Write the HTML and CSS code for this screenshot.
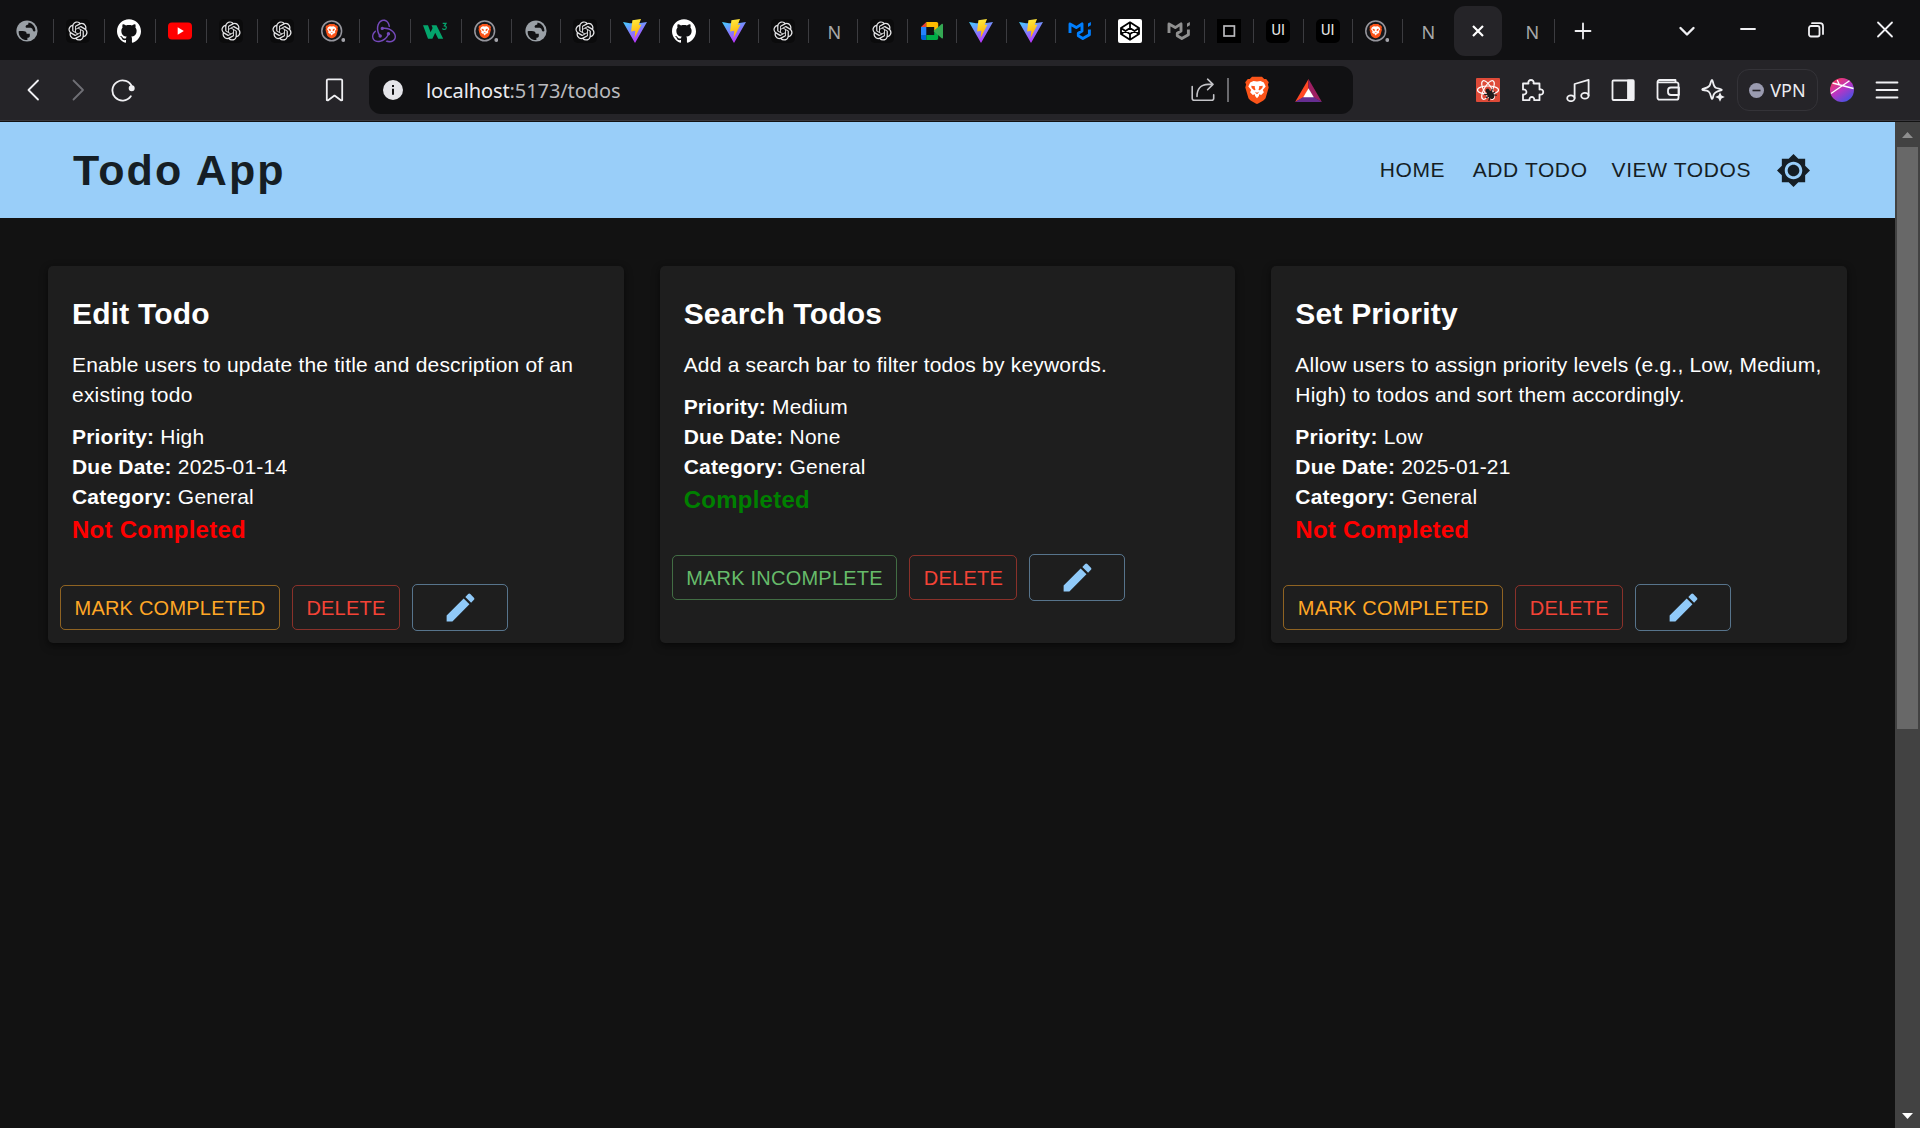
FILE: index.html
```html
<!DOCTYPE html>
<html lang="en">
<head>
<meta charset="utf-8">
<title>Todo App</title>
<link rel="stylesheet" href="styles.css">
</head>
<body>
<svg class="sprite" aria-hidden="true">
  <defs>
    <linearGradient id="vite-body" x1="0" y1="0" x2=".5" y2="1"><stop offset="0" stop-color="#41d1ff"/><stop offset="1" stop-color="#bd34fe"/></linearGradient>
    <linearGradient id="vite-bolt" x1=".4" y1="0" x2=".6" y2="1"><stop offset="0" stop-color="#ffea3d"/><stop offset="1" stop-color="#ffa800"/></linearGradient>
    <linearGradient id="orb" x1=".1" y1="0" x2=".8" y2="1"><stop offset="0" stop-color="#ff3a4e"/><stop offset=".5" stop-color="#b935c4"/><stop offset="1" stop-color="#3b55e6"/></linearGradient>
    <symbol id="globe" viewBox="0 0 24 24"><circle cx="12" cy="12" r="10.6" fill="#9aa0a6"/><path d="M3.7 12.2c1.700-.4 4-.2 5.600 0 1.500.2 2.400 1.100 2.300 2.500l3.200.1v2.500c-.1 1.300-1.500 1.500-2.400 1.500v2.300C7.500 21.400 3.200 17.500 3.700 12.200zM13.600 3.500c4 .7 6.900 4.300 6.800 8.600-1.300.8-2.300.1-2.600-1.200-.4-1.700-1.500-2.100-3.400-2.100h-2.300c-1.400 0-1.900-1-1.200-2.100.5-.8 1.200-.9 2.200-.9z" fill="#111113"/></symbol>
    <symbol id="openai" viewBox="-3 -3 30 30"><rect x="-3" y="-3" width="30" height="30" rx="6" fill="#0b0b0c"/><path fill="#e4e4e6" d="M22.282 9.821a5.985 5.985 0 0 0-.516-4.910 6.046 6.046 0 0 0-6.510-2.900A6.065 6.065 0 0 0 4.981 4.182a5.985 5.985 0 0 0-3.998 2.900 6.046 6.046 0 0 0 .743 7.097 5.980 5.980 0 0 0 .511 4.911 6.051 6.051 0 0 0 6.515 2.900A5.985 5.985 0 0 0 13.260 24a6.056 6.056 0 0 0 5.772-4.206 5.990 5.990 0 0 0 3.998-2.900 6.056 6.056 0 0 0-.747-7.073zM13.260 22.430a4.476 4.476 0 0 1-2.876-1.040l.141-.081 4.779-2.758a.795.795 0 0 0 .393-.681v-6.737l2.020 1.169a.071.071 0 0 1 .038.052v5.583a4.504 4.504 0 0 1-4.495 4.494zM3.600 18.304a4.471 4.471 0 0 1-.535-3.014l.142.085 4.783 2.759a.771.771 0 0 0 .781 0l5.843-3.369v2.332a.080.080 0 0 1-.033.062L9.740 19.950a4.500 4.500 0 0 1-6.140-1.646zM2.341 7.896a4.485 4.485 0 0 1 2.366-1.973V11.600a.766.766 0 0 0 .388.677l5.815 3.354-2.020 1.169a.076.076 0 0 1-.071 0l-4.830-2.787A4.504 4.504 0 0 1 2.341 7.872zm16.597 3.855l-5.833-3.387L15.119 7.200a.076.076 0 0 1 .071 0l4.830 2.791a4.494 4.494 0 0 1-.677 8.105v-5.678a.790.790 0 0 0-.405-.667zm2.010-3.023l-.141-.085-4.774-2.782a.776.776 0 0 0-.785 0L9.409 9.230V6.897a.066.066 0 0 1 .028-.062l4.830-2.787a4.500 4.500 0 0 1 6.681 4.660zm-12.640 4.135l-2.020-1.164a.080.080 0 0 1-.038-.057V6.074a4.500 4.500 0 0 1 7.376-3.453l-.142.080L8.704 5.460a.795.795 0 0 0-.393.682zm1.097-2.366l2.602-1.500 2.607 1.500v2.999l-2.597 1.500-2.607-1.500z"/></symbol>
    <symbol id="github" viewBox="0 0 24 24"><path fill="#fff" d="M12 .297c-6.630 0-12 5.373-12 12 0 5.303 3.438 9.800 8.205 11.385.6.113.820-.258.820-.577 0-.285-.010-1.040-.015-2.040-3.338.724-4.042-1.610-4.042-1.610C4.422 18.070 3.633 17.700 3.633 17.700c-1.087-.744.084-.729.084-.729 1.205.084 1.838 1.236 1.838 1.236 1.070 1.835 2.809 1.305 3.495.998.108-.776.417-1.305.760-1.605-2.665-.3-5.466-1.332-5.466-5.930 0-1.310.465-2.380 1.235-3.220-.135-.303-.540-1.523.105-3.176 0 0 1.005-.322 3.300 1.230.960-.267 1.980-.399 3-.405 1.020.006 2.040.138 3 .405 2.280-1.552 3.285-1.230 3.285-1.230.645 1.653.240 2.873.120 3.176.765.840 1.230 1.910 1.230 3.220 0 4.610-2.805 5.625-5.475 5.920.420.360.810 1.096.810 2.220 0 1.606-.015 2.896-.015 3.286 0 .315.210.690.825.570C20.565 22.092 24 17.592 24 12.297c0-6.627-5.373-12-12-12"/></symbol>
    <symbol id="youtube" viewBox="0 0 24 24"><rect y="3.600" width="24" height="16.800" rx="4" fill="#f00"/><path d="M9.700 8.300v7.400l6.100-3.700z" fill="#fff"/></symbol>
    <symbol id="lion" viewBox="0 0 24 28"><path d="M7 .8h10l2.200 2.300 2-.2 2.600 3.400-.9 2.300.8 2.800-3 10.400c-.8 2.600-5.700 4.800-8.700 6.200-3-1.400-7.900-3.600-8.700-6.200L.3 11.400l.8-2.800-.9-2.300 2.600-3.400 2 .2z" fill="#fb5419"/><path d="M12 5.600l3.500-.7 3.300 1.700 1.900 4-2.900 3.500 1.100 2.200-2.700 2.600-2-.6-.3 1.700L12 22.200 10.100 20l-.3-1.700-2 .6-2.700-2.600 1.100-2.200-2.900-3.500 1.900-4 3.300-1.700z" fill="#fff"/><path d="M6.200 9.700l3.900.5-.4.900.8 2.800-1.300.3-2.500-2.200zM17.800 9.700l-3.900.5.4.9-.8 2.800 1.300.3 2.500-2.200zM10 15.700l2 1 2-1-1.200 2h-1.600z" fill="#fb5419"/></symbol>
    <symbol id="brave-tab" viewBox="0 0 24 24"><circle cx="10.700" cy="11.900" r="9.900" fill="#17171a" stroke="#96969d" stroke-width="1.500"/><use href="#lion" x="4.200" y="4.600" width="13" height="15"/><circle cx="22.300" cy="21" r="1.900" fill="#a3a3aa"/></symbol>
    <symbol id="redux" viewBox="0 0 24 24"><path fill="#764abc" d="M16.634 16.504c.870-.075 1.543-.840 1.500-1.754-.047-.914-.796-1.648-1.709-1.648h-.061a1.710 1.710 0 0 0-1.648 1.769c.030.479.226.869.494 1.153-1.048 2.038-2.621 3.535-5.005 4.795-1.603.838-3.296 1.154-4.944.929-1.378-.194-2.456-.810-3.116-1.799-.988-1.499-1.078-3.116-.255-4.734.601-1.166 1.499-2.023 2.099-2.443a9.960 9.960 0 0 1-.420-1.543C-.868 14.408-.416 18.752.932 20.805c1.004 1.498 3.057 2.456 5.304 2.456.6 0 1.230-.044 1.843-.194 3.897-.749 6.848-3.086 8.541-6.532zm5.348-3.746c-2.320-2.728-5.738-4.226-9.634-4.226h-.510c-.253-.554-.837-.899-1.498-.899h-.045c-.943 0-1.678.810-1.647 1.753.030.898.794 1.648 1.708 1.648h.074a1.690 1.690 0 0 0 1.499-1.049h.555c2.309 0 4.495.674 6.488 1.992 1.527 1.005 2.622 2.323 3.237 3.896.538 1.288.509 2.547-.045 3.597-.855 1.647-2.294 2.517-4.196 2.517-1.199 0-2.367-.375-2.967-.644-.360.298-.960.793-1.394 1.093 1.318.598 2.652.943 3.940.943 2.922 0 5.093-1.647 5.918-3.236.898-1.798.824-4.824-1.470-7.416zM6.490 17.042c.030.899.793 1.648 1.708 1.648h.060a1.688 1.688 0 0 0 1.648-1.768c0-.899-.779-1.647-1.693-1.647h-.060c-.060 0-.149 0-.225.029-1.243-2.098-1.768-4.346-1.572-6.772.120-1.828.720-3.417 1.797-4.735.899-1.124 2.593-1.683 3.746-1.708 3.236-.061 4.585 3.971 4.689 5.574l1.498.450c-.345-4.914-3.400-7.492-6.322-7.492-2.742 0-5.273 1.993-6.293 4.915-1.393 3.896-.479 7.641 1.229 10.638-.149.195-.239.539-.210.868z"/></symbol>
    <symbol id="w3" viewBox="0 0 24 24"><path d="M0 6.200h5l2.600 7 2-4.300L8.500 6.200h5l6.700 13.500h-5l-3-6-2.800 6H5z" fill="#04a56c"/><path d="M19.700 4.300h3.400l-1.700 2.500c2.700.1 2.300 3.700-.2 3.600-.9 0-1.500-.4-1.700-1.100" fill="none" stroke="#04a56c" stroke-width="1.200"/></symbol>
    <symbol id="vite" viewBox="0 0 24 24"><path d="M0 3L12 24 24 3 17.500 4.100 7 4.200z" fill="url(#vite-body)"/><path d="M9.400 1.300L18 0l-2.300 5.900 2.800-.4L11.600 19l.7-7.200-4.200.7z" fill="url(#vite-bolt)"/></symbol>
    <symbol id="meet" viewBox="0 0 24 24"><path d="M1 8L6.300 2.900V8z" fill="#ea4335"/><path d="M6.300 2.900H16.500a1.700 1.700 0 0 1 1.700 1.700V10l-4 3V8H6.300z" fill="#ffba00"/><path d="M1 8h5.300v8H1z" fill="#2684fc"/><path d="M1 16h5.300v5H2.800A1.800 1.800 0 0 1 1 19.200z" fill="#0066da"/><path d="M6.300 16h7.900v-5l4 3v5.300a1.700 1.700 0 0 1-1.700 1.700H6.300z" fill="#00ac47"/><path d="M13.500 12l8.200-7.100c.6-.5 1.300-.2 1.300.5v13.300c0 .7-.7 1-1.300.5z" fill="#34a853"/></symbol>
    <symbol id="mui" viewBox="0 0 24 24"><path d="M2 14V4.900l6.300 3.700L14 4.900v7l-3.700 2.300v2.600l4.500 2.700 6.600-3.800v-5.300" fill="none" stroke="currentColor" stroke-width="2.900" stroke-linejoin="round"/><path d="M20 4.600l2.900-1.700v3.300L20 7.900z" fill="currentColor"/></symbol>
    <symbol id="codepen" viewBox="0 0 24 24"><rect width="24" height="24" rx="2" fill="#fff"/><path d="M12 3.300l9 5.700v6l-9 5.800L3 15V9zM12 3.300V9m0 6v5.800M3 9l9 6 9-6M3 15l9-6 9 6" fill="none" stroke="#000" stroke-width="1.800" stroke-linejoin="round"/></symbol>
    <symbol id="square" viewBox="0 0 24 24"><rect width="24" height="24" fill="#000"/><rect x="7" y="7" width="10.400" height="10" fill="none" stroke="#b9b9bc" stroke-width="1.700"/></symbol>
  </defs>
</svg>

<div class="browser">
  <div class="tabs">
    <div class="tab"><svg class="fav"><use href="#globe"/></svg></div>
    <div class="tab"><svg class="fav"><use href="#openai"/></svg></div>
    <div class="tab"><svg class="fav"><use href="#github"/></svg></div>
    <div class="tab"><svg class="fav"><use href="#youtube"/></svg></div>
    <div class="tab"><svg class="fav"><use href="#openai"/></svg></div>
    <div class="tab"><svg class="fav"><use href="#openai"/></svg></div>
    <div class="tab"><svg class="fav"><use href="#brave-tab"/></svg></div>
    <div class="tab"><svg class="fav"><use href="#redux"/></svg></div>
    <div class="tab"><svg class="fav"><use href="#w3"/></svg></div>
    <div class="tab narrow"><svg class="fav"><use href="#brave-tab"/></svg></div>
    <div class="tab narrow"><svg class="fav"><use href="#globe"/></svg></div>
    <div class="tab narrow"><svg class="fav"><use href="#openai"/></svg></div>
    <div class="tab narrow"><svg class="fav"><use href="#vite"/></svg></div>
    <div class="tab narrow"><svg class="fav"><use href="#github"/></svg></div>
    <div class="tab narrow"><svg class="fav"><use href="#vite"/></svg></div>
    <div class="tab narrow"><svg class="fav"><use href="#openai"/></svg></div>
    <div class="tab narrow"><span class="letter">N</span></div>
    <div class="tab narrow"><svg class="fav"><use href="#openai"/></svg></div>
    <div class="tab narrow"><svg class="fav"><use href="#meet"/></svg></div>
    <div class="tab narrow"><svg class="fav"><use href="#vite"/></svg></div>
    <div class="tab narrow"><svg class="fav"><use href="#vite"/></svg></div>
    <div class="tab narrow"><svg class="fav blue"><use href="#mui"/></svg></div>
    <div class="tab narrow"><svg class="fav"><use href="#codepen"/></svg></div>
    <div class="tab narrow"><svg class="fav gray"><use href="#mui"/></svg></div>
    <div class="tab narrow"><svg class="fav"><use href="#square"/></svg></div>
    <div class="tab narrow"><span class="ui-mark">UI</span></div>
    <div class="tab narrow"><span class="ui-mark">UI</span></div>
    <div class="tab narrow"><svg class="fav"><use href="#brave-tab"/></svg></div>
    <div class="tab narrow plain"><span class="letter">N</span></div>
    <div class="tab active"><svg class="close-icon" viewBox="0 0 12 12"><path d="M1 1l10 10M11 1L1 11"/></svg></div>
    <div class="tab last"><span class="letter">N</span></div>
    <div class="new-tab"><svg class="line-icon" viewBox="0 0 24 24"><path d="M12 4.500v15M4.500 12h15"/></svg></div>
    <div class="window-controls">
      <svg class="line-icon thick chevron" viewBox="0 0 24 24"><path d="M5.500 10l6.500 6.500 6.500-6.500"/></svg>
      <svg class="line-icon minimize" viewBox="0 0 24 24"><path d="M5 11h14"/></svg>
      <svg class="line-icon maximize" viewBox="0 0 24 24"><rect x="5" y="8" width="10.500" height="10.500" rx="2"/><path d="M8 5.200h8a3 3 0 0 1 3 3V16"/></svg>
      <svg class="line-icon" viewBox="0 0 24 24"><path d="M5 4.500l14 14M19 4.500l-14 14"/></svg>
    </div>
  </div>

  <div class="toolbar">
    <div class="nav-icons">
      <svg class="line-icon" viewBox="0 0 24 24"><path d="M17 2.500L7.500 12l9.500 9.500"/></svg>
      <svg class="line-icon dim" viewBox="0 0 24 24"><path d="M7.500 2.500L17 12l-9.500 9.500"/></svg>
      <svg class="line-icon" viewBox="0 0 24 24"><path d="M19.800 18.300A10.100 10.100 0 1 1 21 9"/><circle cx="20.700" cy="10.200" r="2.100" fill="#f0f0f3"/></svg>
    </div>
    <svg class="line-icon bookmark" viewBox="0 0 24 24"><path d="M5 1.300h13a1.200 1.200 0 0 1 1.200 1.200v19.700l-1 .2-6.700-4.800-6.700 4.800-1-.2V2.500A1.200 1.200 0 0 1 5 1.300z"/></svg>
    <div class="address">
      <svg class="info" viewBox="0 0 20 20"><circle cx="10" cy="10" r="10" fill="#e4e4e9"/><path d="M10 5v2M10 8.700v6" stroke="#111113" stroke-width="2"/></svg>
      <span class="url">localhost<span class="url-rest">:5173/todos</span></span>
      <svg class="line-icon share" viewBox="0 0 24 24"><path d="M1.200 8.500v11.800a2 2 0 0 0 2 2h17.500a2 2 0 0 0 2-2v-3.500M6 18.500C6 11 10 6.400 17.200 6.400H22M16.600 1.200L22 6.400l-5.400 5.300"/></svg>
      <span class="divider"></span>
      <svg class="shield" viewBox="0 0 24 28"><use href="#lion"/></svg>
      <svg class="bat" viewBox="0 0 28 24"><path d="M14 0L0 24l9.300-5L14 10z" fill="#ff4724"/><path d="M14 0l14 24-9.300-5L14 10z" fill="#9e1f63"/><path d="M0 24l8.500-5.200h11L28 24z" fill="#662d91"/><path d="M14 9.600l5.500 9.400h-11z" fill="#fff"/></svg>
    </div>
    <div class="tools">
      <svg class="tool" viewBox="0 0 24 24"><rect width="24" height="24" rx="1" fill="#de4a38"/><g fill="none" stroke="#fff" stroke-width="1.200"><ellipse cx="12" cy="12" rx="10.500" ry="4"/><ellipse cx="12" cy="12" rx="10.500" ry="4" transform="rotate(60 12 12)"/><ellipse cx="12" cy="12" rx="10.500" ry="4" transform="rotate(120 12 12)"/></g><g transform="rotate(-35 14 16)"><ellipse cx="14" cy="17" rx="3" ry="4.500" fill="#1c1c1c"/><circle cx="14" cy="11.800" r="2" fill="#1c1c1c"/><path d="M9 13l10 8M19 13L9 21M8.500 17h11" stroke="#1c1c1c" stroke-width="1.200"/></g></svg>
      <svg class="tool line-icon" viewBox="0 0 24 24"><path d="M2 5.500h5.500c-1.300-4.700 6.300-4.700 5 0H18.500v6c5-1.300 5 6.300 0 5V22.200h-5.300c.6-4.300-5.300-4.300-4.700 0H2v-5.700c4.600.7 4.600-5.700 0-5z"/></svg>
      <svg class="tool line-icon" viewBox="0 0 24 24"><path d="M8.600 20V6l14-4.200v15.800"/><ellipse cx="4.900" cy="20.300" rx="3.700" ry="2.900"/><ellipse cx="18.900" cy="17.700" rx="3.700" ry="2.900"/></svg>
      <svg class="tool line-icon" viewBox="0 0 24 24"><rect x="1.500" y="2.500" width="21" height="19.500" rx="1"/><path d="M17 2.500h5.500V22H17z" fill="#f0f0f3"/></svg>
      <svg class="tool line-icon" viewBox="0 0 24 24"><path d="M22.500 8.500V6.300a2 2 0 0 0-2-2H1.500M22.500 8.500v11.200a2 2 0 0 1-2 2h-17a2 2 0 0 1-2-2V4a2 2 0 0 1 2-2h16v2M23 9.500h-8a3 3 0 0 0-3 3v1.500a3 3 0 0 0 3 3h8z"/></svg>
      <svg class="tool line-icon" viewBox="0 0 24 24"><path d="M11 1.800c1.300 0 .7 7.200 4.300 8.200 3 .8 5.500.8 5.500 1.900 0 1-6.600.8-8.200 5-.7 2-.6 4.300-1.600 4.300s-.8-5.600-3.500-7.800C5 11.600 1.200 12.800 1.200 11.500s5-.6 7.200-3.600C10 5.500 9.900 1.800 11 1.800z"/><path d="M19 14.300l1.500 3.200 3.300 1.500-3.300 1.500L19 23.800l-1.500-3.300-3.300-1.500 3.300-1.500z" fill="#f0f0f3" stroke="none"/></svg>
      <div class="vpn"><svg class="vpn-dot" viewBox="0 0 15 15"><circle cx="7.500" cy="7.500" r="7.500" fill="#9a9bb0"/><path d="M3.500 7.500h8" stroke="#252428" stroke-width="1.600"/></svg><span>VPN</span></div>
      <svg class="tool" viewBox="0 0 24 24"><circle cx="12" cy="12" r="12" fill="url(#orb)"/><path d="M2.500 5l21 5.500M1 15.500L19.500 2.800M9.500 7l-2.300-5" stroke="#fff" stroke-width="1.300" fill="none"/></svg>
      <svg class="tool line-icon menu" viewBox="0 0 24 24"><path d="M1.500 4.500h21M1.500 12h21M1.500 19.500h21"/></svg>
    </div>
  </div>
</div>

<div class="viewport">
  <div class="page">
    <header class="appbar">
      <div class="brand">Todo App</div>
      <nav class="menu-links">
        <a class="link home">HOME</a>
        <a class="link add">ADD TODO</a>
        <a class="link view">VIEW TODOS</a>
        <svg class="theme-icon" viewBox="0 0 24 24"><path d="M20 8.690V4h-4.690L12 .690 8.690 4H4v4.690L.690 12 4 15.310V20h4.690L12 23.310 15.310 20H20v-4.690L23.310 12 20 8.690zM12 18c-3.310 0-6-2.690-6-6s2.690-6 6-6 6 2.690 6 6-2.690 6-6 6zm0-10c-2.210 0-4 1.790-4 4s1.790 4 4 4 4-1.790 4-4-1.790-4-4-4z"/></svg>
      </nav>
    </header>

    <main class="cards">
      <article class="card">
        <h2 class="card-title">Edit Todo</h2>
        <p class="text">Enable users to update the title and description of an existing todo</p>
        <p class="facts"><b>Priority:</b> High<br><b>Due Date:</b> 2025-01-14<br><b>Category:</b> General</p>
        <p class="status open">Not Completed</p>
        <div class="actions">
          <button class="btn warning">MARK COMPLETED</button>
          <button class="btn error">DELETE</button>
          <button class="btn edit"><svg class="pencil" viewBox="0 0 24 24"><path d="M3 17.250V21h3.750L17.810 9.940l-3.750-3.750L3 17.250zM20.710 7.040c.390-.390.390-1.020 0-1.410l-2.340-2.340a.9959.9959 0 0 0-1.410 0l-1.830 1.830 3.750 3.750 1.830-1.830z"/></svg></button>
        </div>
      </article>
      <article class="card">
        <h2 class="card-title">Search Todos</h2>
        <p class="text">Add a search bar to filter todos by keywords.</p>
        <p class="facts"><b>Priority:</b> Medium<br><b>Due Date:</b> None<br><b>Category:</b> General</p>
        <p class="status done">Completed</p>
        <div class="actions">
          <button class="btn success">MARK INCOMPLETE</button>
          <button class="btn error">DELETE</button>
          <button class="btn edit"><svg class="pencil" viewBox="0 0 24 24"><path d="M3 17.250V21h3.750L17.810 9.940l-3.750-3.750L3 17.250zM20.710 7.040c.390-.390.390-1.020 0-1.410l-2.340-2.340a.9959.9959 0 0 0-1.410 0l-1.830 1.830 3.750 3.750 1.830-1.830z"/></svg></button>
        </div>
      </article>
      <article class="card">
        <h2 class="card-title">Set Priority</h2>
        <p class="text">Allow users to assign priority levels (e.g., Low, Medium, High) to todos and sort them accordingly.</p>
        <p class="facts"><b>Priority:</b> Low<br><b>Due Date:</b> 2025-01-21<br><b>Category:</b> General</p>
        <p class="status open">Not Completed</p>
        <div class="actions">
          <button class="btn warning">MARK COMPLETED</button>
          <button class="btn error">DELETE</button>
          <button class="btn edit"><svg class="pencil" viewBox="0 0 24 24"><path d="M3 17.250V21h3.750L17.810 9.940l-3.750-3.750L3 17.250zM20.710 7.040c.390-.390.390-1.020 0-1.410l-2.340-2.340a.9959.9959 0 0 0-1.410 0l-1.830 1.830 3.750 3.750 1.830-1.830z"/></svg></button>
        </div>
      </article>
    </main>
  </div>
  <div class="scrollbar">
    <svg class="arrow up" viewBox="0 0 11 6"><path d="M5.500 0L11 6H0z"/></svg>
    <div class="thumb"></div>
    <svg class="arrow down" viewBox="0 0 11 6"><path d="M0 0h11L5.500 6z"/></svg>
  </div>
</div>
</body>
</html>
```
FILE: styles.css
```css
* { box-sizing: border-box; }
body {
  margin: 0;
  height: 1128px;
  display: flex;
  flex-direction: column;
  overflow: hidden;
  background: #121212;
  color: #fff;
  font-family: "Liberation Sans", Arial, sans-serif;
}
svg { display: block; flex: none; }
.sprite { position: absolute; width: 0; height: 0; }

/* Browser chrome */
.browser { height: 122px; flex: none; font-family: "Noto Sans", sans-serif; }
.tabs {
  height: 60px;
  padding-left: 3px;
  display: flex;
  align-items: center;
  background: #111113;
}
.tab {
  width: 51px;
  height: 24px;
  margin-top: 2px;
  padding-right: 2px;
  border-right: 1px solid #3c3c40;
  display: flex;
  align-items: center;
  justify-content: center;
  flex: none;
}
.tab.narrow { width: 49.5px; padding-right: 0; }
.tab.plain { border-right-color: transparent; }
.fav { width: 24px; height: 24px; }
.fav.blue { color: #007fff; }
.fav.gray { color: #909090; }
.letter { padding: 1px 0 0 3px; font-size: 18px; line-height: 24px; color: #a8a8aa; }
.ui-mark {
  width: 24px;
  height: 24px;
  border-radius: 5px;
  background: #000;
  color: #e8e8e8;
  font: 400 14.500px/24px Roboto, sans-serif;
  text-align: center;
}
.tab.active {
  width: 48px;
  height: 50px;
  margin: 2px 6px 0 1.500px;
  padding: 0;
  border: 0;
  border-radius: 11px;
  background: #252428;
}
.close-icon { width: 12px; height: 12px; fill: none; stroke: #fff; stroke-width: 2.200; }
.tab.last { width: 47.500px; padding-right: 0; }
.new-tab { width: 55px; padding-top: 1px; display: flex; justify-content: center; }
.window-controls {
  margin-left: auto;
  margin-right: 23px;
  display: flex;
}
.chevron { margin-right: 36.500px; }
.minimize { margin-right: 44.500px; }
.maximize { margin-right: 45px; }
.line-icon {
  width: 24px;
  height: 24px;
  fill: none;
  stroke: #f0f0f3;
  stroke-width: 1.800;
  stroke-linecap: round;
  stroke-linejoin: round;
}
.line-icon.thick { stroke-width: 2.400; }
.toolbar {
  height: 61px;
  padding-left: 21px;
  display: flex;
  align-items: center;
  background: #252428;
  border-bottom: 1px solid #38373c;
}
.nav-icons { display: flex; gap: 21px; }
.dim { stroke: #6f6f75; }
.bookmark { margin-left: 188px; }
.address {
  width: 984px;
  height: 48px;
  margin-left: 22px;
  padding-left: 14px;
  padding-right: 31px;
  display: flex;
  align-items: center;
  border-radius: 12px;
  background: #111113;
}
.info { width: 20px; height: 20px; }
.url { margin-left: 23px; padding-top: 1px; font-size: 20px; line-height: 30px; letter-spacing: -.1px; color: #ececf0; }
.url-rest { color: #b9b9bd; }
.share { margin-left: auto; stroke: #c4c4c8; stroke-width: 1.600; }
.divider { width: 2px; height: 24px; margin: 0 16px 0 12px; background: #6a6a6e; }
.shield { width: 24px; height: 28px; }
.bat { width: 27px; height: 23px; margin-left: 26px; }
.tools { display: flex; align-items: center; margin-left: auto; margin-right: 21px; gap: 21px; }
.tool { width: 24px; height: 24px; }
.vpn {
  width: 81px;
  height: 42px;
  margin: 0 -9px;
  border: 1.500px solid #343338;
  border-radius: 12px;
  display: flex;
  align-items: center;
  justify-content: center;
  gap: 6px;
  font-size: 18px;
  line-height: 22px;
  color: #ececf0;
}
.vpn span { margin-top: -1px; }
.vpn-dot { width: 15px; height: 15px; }

/* Page area */
.viewport { flex: 1; display: flex; min-height: 0; }
.page { width: 1895px; }
.appbar {
  height: 96px;
  padding: 0 84px 0 73px;
  display: flex;
  align-items: center;
  justify-content: space-between;
  background: #99cef9;
  color: #151e25;
}
.brand { font-size: 43px; font-weight: 700; line-height: 52px; letter-spacing: 2.100px; }
.menu-links { display: flex; align-items: center; }
.link { font-size: 21px; line-height: 30px; letter-spacing: .6px; }
.link.add { margin-left: 27.500px; }
.link.view { margin-left: 24px; }
.theme-icon { width: 35px; height: 35px; margin-left: 25px; fill: #151e25; }

.cards {
  padding: 48px;
  display: grid;
  grid-template-columns: repeat(3, 1fr);
  gap: 36px;
}
.card {
  height: 377px;
  border-radius: 5px;
  background: #1e1e1e;
  box-shadow: 0 2px 4px rgba(0, 0, 0, .3), 0 3px 10px rgba(0, 0, 0, .25);
}
.card-title { margin: 28px 24px 16px; font-size: 30px; line-height: 40px; font-weight: 700; letter-spacing: .2px; }
.text, .facts { margin: 0 24px 12px; font-size: 21px; line-height: 30px; letter-spacing: .2px; }
.facts { margin-bottom: 0; }
.status { margin: 0 24px; font-size: 24px; line-height: 36px; font-weight: 700; letter-spacing: .25px; }
.status.open { color: #f00; }
.status.done { color: #008000; }
.actions { margin: 36px 12px 0; display: flex; align-items: center; gap: 12px; }
.btn {
  height: 45px;
  padding: 0 13.500px;
  border: 1px solid;
  border-radius: 5px;
  background: none;
  font: 20px/36px "Liberation Sans", Arial, sans-serif;
  letter-spacing: .22px;
  white-space: nowrap;
}
.warning { color: #ffa726; border-color: rgba(255, 167, 38, .5); }
.error { color: #f44336; border-color: rgba(244, 67, 54, .5); }
.success { color: #66bb6a; border-color: rgba(102, 187, 106, .5); }
.edit {
  width: 96px;
  height: 47px;
  display: flex;
  align-items: center;
  justify-content: center;
  border-color: rgba(144, 202, 249, .5);
}
.pencil { width: 37px; height: 37px; fill: #90caf9; }

.scrollbar {
  width: 25px;
  padding: 10px 2px 9px;
  display: flex;
  flex-direction: column;
  align-items: center;
  background: #424242;
}
.thumb { width: 21px; height: 582px; margin-top: 9px; background: #686868; }
.arrow { width: 11px; height: 6px; }
.up { fill: #8e8e8e; }
.down { fill: #fff; margin-top: auto; }
```
